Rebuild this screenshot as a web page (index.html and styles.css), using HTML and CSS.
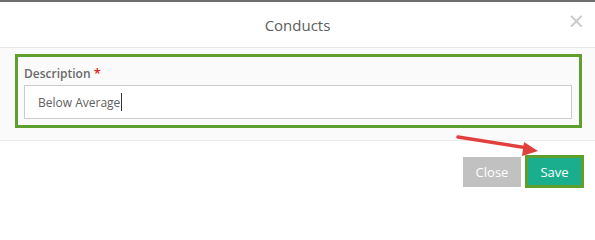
FILE: index.html
```html
<!DOCTYPE html>
<html>
<head>
<meta charset="utf-8">
<link rel="stylesheet" href="styles.css">
</head>
<body>
<div class="modal">
  <div class="modal-header">
    <h4 class="title">Conducts</h4>
    <span class="close-x">&times;</span>
  </div>
  <div class="modal-body">
    <div class="highlight">
      <label class="label">Description <span class="req">*</span></label>
      <div class="input"><span>Below Average</span><span class="caret"></span></div>
    </div>
  </div>
  <div class="modal-footer">
    <button class="btn btn-close">Close</button>
    <div class="save-wrap"><button class="btn btn-save">Save</button></div>
  </div>
  <svg class="arrow" width="595" height="200" viewBox="0 0 595 200">
    <line x1="458" y1="137" x2="528" y2="148" stroke="#e0413f" stroke-width="3.5" stroke-linecap="round"/>
    <polygon points="538,151 524,142 522,156" fill="#e0413f"/>
  </svg>
</div>
</body>
</html>
```
FILE: styles.css
```css
html, body {
  margin: 0;
  padding: 0;
  background: #ffffff;
}
body {
  font-family: "Open Sans", "Liberation Sans", sans-serif;
  width: 595px;
  height: 200px;
  overflow: hidden;
}
.modal {
  position: relative;
  width: 595px;
  height: 200px;
  border-top: 2px solid #6e6e6e;
  box-sizing: border-box;
}
.modal-header {
  position: relative;
  height: 45px;
  border-bottom: 1px solid #e8e8e8;
  display: flex;
  align-items: center;
  justify-content: center;
}
.title {
  margin: 0;
  font-size: 15px;
  font-weight: 500;
  color: #5d5d5d;
  padding-top: 1px;
}
.close-x {
  position: absolute;
  right: 10px;
  top: 9px;
  font-size: 21px;
  line-height: 21px;
  color: #c8c8c8;
  font-family: "DejaVu Sans", sans-serif;
}
.modal-body {
  background: #fafafa;
  height: 93px;
  padding: 6px 12px 0 15px;
  box-sizing: border-box;
  border-bottom: 1px solid #ececec;
}
.highlight {
  width: 567px;
  height: 74px;
  border: 3px solid #5fa02c;
  box-sizing: border-box;
  padding: 7px 7px 0 6px;
}
.label {
  display: block;
  font-size: 12px;
  font-weight: 600;
  color: #6a6a6a;
  line-height: 18px;
  height: 21px;
}
.req {
  color: #e02020;
  font-size: 13px;
}
.input {
  height: 34px;
  border: 1px solid #cccccc;
  background: #ffffff;
  box-sizing: border-box;
  padding-left: 13px;
  display: flex;
  align-items: center;
  font-size: 12px;
  color: #5f5f5f;
}
.caret {
  display: inline-block;
  width: 1px;
  height: 18px;
  background: #333;
  margin-left: 1px;
}
.modal-footer {
  display: flex;
  justify-content: flex-end;
  align-items: center;
  padding: 14px 11px 0 0;
  gap: 4px;
}
.btn {
  border: none;
  font-family: "Open Sans", "Liberation Sans", sans-serif;
  font-size: 13px;
  color: #ffffff;
  height: 30px;
  padding: 0;
  cursor: pointer;
}
.btn-close {
  width: 58px;
  background: #c1c1c1;
}
.save-wrap {
  border: 3px solid #5fa02c;
  display: flex;
}
.btn-save {
  width: 53px;
  height: 27px;
  background: #1aae8f;
}
.arrow {
  position: absolute;
  left: 0;
  top: -2px;
  pointer-events: none;
}
```
